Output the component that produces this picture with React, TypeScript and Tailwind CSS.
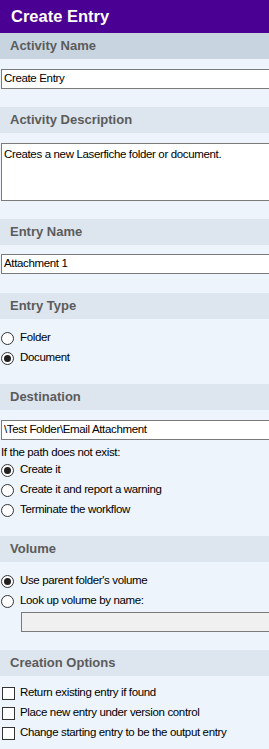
import React from 'react';

const body = "font-['Liberation_Sans',Arial,sans-serif] text-[11.5px] tracking-[-0.35px] text-black";

const Header: React.FC<{ title: string; active?: boolean }> = ({ title, active }) => (
  <div
    className={`h-[26px] flex items-center pl-[10px] font-['Liberation_Sans',Arial,sans-serif] font-bold text-[13px] text-[#5b5b5b] ${
      active ? 'bg-[#c8d5e1]' : 'bg-[#dde5ee]'
    }`}
  >
    {title}
  </div>
);

const TextBox: React.FC<{ value: string; className?: string }> = ({ value, className = '' }) => (
  <div className={`ml-px h-[20px] flex items-center pl-[2px] bg-white border border-r-0 border-[#7a7a7a] ${body} ${className}`}>
    {value}
  </div>
);

const Radio: React.FC<{ label: string; checked?: boolean }> = ({ label, checked }) => (
  <div className="h-[20px] flex items-center">
    <span className="ml-[1px] w-[13px] h-[13px] rounded-full border border-[#333] bg-white flex items-center justify-center">
      {checked && <span className="w-[7px] h-[7px] rounded-full bg-[#1f1f1f]" />}
    </span>
    <span className={`ml-[6px] ${body}`}>{label}</span>
  </div>
);

const Check: React.FC<{ label: string }> = ({ label }) => (
  <div className="h-[20px] flex items-center">
    <span className="ml-[2px] w-[13px] h-[13px] border border-[#333] bg-white" />
    <span className={`ml-[5px] ${body}`}>{label}</span>
  </div>
);

export default function App() {
  return (
    <div className="w-[269px] h-[749px] overflow-hidden bg-[#edf4fc]">
      <div className="h-[33px] bg-[#4a0092] flex items-center pl-[11px] font-['Liberation_Sans',Arial,sans-serif] font-bold text-[16.5px] text-white">
        Create Entry
      </div>

      <Header title="Activity Name" active />
      <div className="pt-[10px] pb-[18px]">
        <TextBox value="Create Entry" />
      </div>

      <Header title="Activity Description" />
      <div className="pt-[10px] pb-[18px]">
        <div className={`ml-px h-[58px] pl-[2px] pt-[2px] bg-white border border-r-0 border-[#7a7a7a] ${body}`}>
          Creates a new Laserfiche folder or document.
        </div>
      </div>

      <Header title="Entry Name" />
      <div className="pt-[9px] pb-[19px]">
        <TextBox value="Attachment 1" />
      </div>

      <Header title="Entry Type" />
      <div className="pt-[9px] pb-[16px]">
        <Radio label="Folder" />
        <Radio label="Document" checked />
      </div>

      <Header title="Destination" />
      <div className="pt-[10px] pb-[16px]">
        <TextBox value="\Test Folder\Email Attachment" />
        <div className={`mt-[6px] h-[14px] flex items-center pl-[1px] ${body}`}>If the path does not exist:</div>
        <Radio label="Create it" checked />
        <Radio label="Create it and report a warning" />
        <Radio label="Terminate the workflow" />
      </div>

      <Header title="Volume" />
      <div className="pt-[9px] pb-[18px]">
        <Radio label="Use parent folder's volume" checked />
        <Radio label="Look up volume by name:" />
        <div className="ml-[21px] mt-[1px] h-[20px] bg-[#f0f0f0] border border-r-0 border-[#7a7a7a]" />
      </div>

      <Header title="Creation Options" />
      <div className="pt-[7px]">
        <Check label="Return existing entry if found" />
        <Check label="Place new entry under version control" />
        <Check label="Change starting entry to be the output entry" />
      </div>
    </div>
  );
}
